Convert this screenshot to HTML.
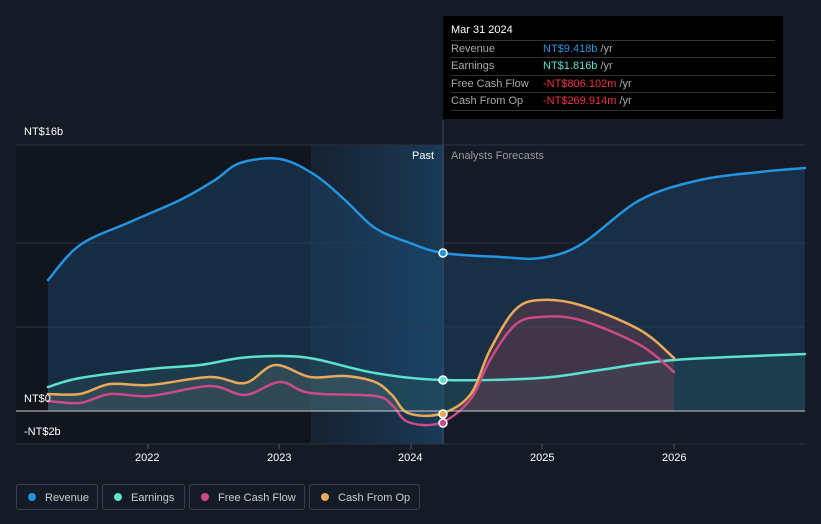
<!DOCTYPE html><html><head><style>
body{margin:0;width:821px;height:524px;background:#151b26;font-family:"Liberation Sans",sans-serif;overflow:hidden;position:relative}
.t{position:absolute;color:#fff;font-size:11px}
.tip{position:absolute;left:443px;top:16px;width:340px;height:103px;background:#000}
.tip div{position:absolute;font-size:11px}
.ln{position:absolute;left:8px;width:324px;height:1px;background:#333}
.leg{position:absolute;top:484px;height:26px;border:1px solid #3a404b;border-radius:3px;color:#ccc;font-size:11px;line-height:26px;box-sizing:border-box}
.leg i{display:inline-block;width:8px;height:8px;border-radius:50%;margin:0 9px 0 11px;vertical-align:-0px}
</style></head><body>
<svg id="s" width="821" height="524" style="position:absolute;left:0;top:0">
<defs><linearGradient id="g" x1="0" x2="1"><stop offset="0" stop-color="#1a3550" stop-opacity=".3"/><stop offset="1" stop-color="#1a4a70" stop-opacity=".7"/></linearGradient></defs>
<rect x="16" y="145" width="295" height="299" fill="#11151e"/>
<rect x="311" y="145" width="133" height="299" fill="url(#g)"/>
<g stroke="#2a3140" stroke-width="1"><line x1="16" y1="145" x2="805" y2="145"/><line x1="16" y1="243" x2="805" y2="243"/><line x1="16" y1="327" x2="805" y2="327"/><line x1="16" y1="444" x2="805" y2="444"/></g>
<line x1="443" y1="120" x2="443" y2="444" stroke="#3a4a5a"/>
<path id="rf" fill="#1d4a6e" fill-opacity=".45"/>
<path id="ef" fill="#2a5a5a" fill-opacity=".35"/>
<path id="cf" fill="#888" fill-opacity=".18"/>
<path id="ff" fill="#7a4050" fill-opacity=".4"/>
<g fill="none" stroke-width="2.5" stroke-linejoin="round" stroke-linecap="round">
<path id="r" stroke="#2394df"/><path id="e" stroke="#5ce0cf"/><path id="f" stroke="#cc4a86"/><path id="c" stroke="#e8a95a"/>
</g>
<line x1="16" y1="411" x2="805" y2="411" stroke="#ccc" stroke-width="1"/>
<g stroke="#fff" stroke-width="1.5"><circle cx="443" cy="253" r="4" fill="#2394df"/><circle cx="443" cy="380" r="4" fill="#5ce0cf"/><circle cx="443" cy="414" r="4" fill="#e8a95a"/><circle cx="443" cy="423" r="4" fill="#cc4a86"/></g>
<g stroke="#555"><line x1="148" y1="444" x2="148" y2="449"/><line x1="279" y1="444" x2="279" y2="449"/><line x1="411" y1="444" x2="411" y2="449"/><line x1="542" y1="444" x2="542" y2="449"/><line x1="674" y1="444" x2="674" y2="449"/></g>
</svg>
<script>
function sm(p){var d="M"+p[0][0]+","+p[0][1];for(var i=0;i<p.length-1;i++){var a=p[i-1]||p[i],b=p[i],c=p[i+1],e=p[i+2]||c;d+=" C"+(b[0]+(c[0]-a[0])/6)+","+(b[1]+(c[1]-a[1])/6)+" "+(c[0]-(e[0]-b[0])/6)+","+(c[1]-(e[1]-b[1])/6)+" "+c[0]+","+c[1];}return d;}
var R=[[48,280],[80,245],[130,222],[180,200],[215,180],[240,163],[280,159],[315,175],[345,200],[375,228],[410,243],[443,253],[500,257],[540,258],[580,245],[640,200],[700,180],[760,172],[805,168]];
var E=[[48,387],[80,378],[150,369],[200,365],[240,358],[280,356],[315,359],[375,373],[443,380],[540,378],[600,370],[674,360],[805,354]];
var F=[[48,401],[80,403],[110,394],[150,396],[210,386],[245,395],[280,382],[310,393],[375,396],[392,405],[408,422],[440,423],[470,400],[490,360],[515,325],[540,317],[580,320],[640,345],[674,372]];
var C=[[48,394],[80,394],[110,384],[150,385],[210,377],[245,383],[275,365],[310,377],[345,376],[375,382],[392,395],[408,413],[440,414],[470,395],[490,350],[515,310],[540,300],[580,305],[640,330],[674,358]];
function s(id,v){document.getElementById(id).setAttribute("d",v);}
s("r",sm(R));s("e",sm(E));s("f",sm(F));s("c",sm(C));
s("rf",sm(R)+" L805,411 L48,411Z");s("ef",sm(E)+" L805,411 L48,411Z");
s("cf",sm(C.slice(0,13))+" L440,411 L48,411Z");
s("ff",sm(C.slice(12))+" L674,411 L440,411Z");
</script>
<div class="t" style="left:24px;top:126px">NT$16b</div>
<div class="t" style="left:24px;top:393px">NT$0</div>
<div class="t" style="left:24px;top:426px">-NT$2b</div>
<div class="t" style="left:412px;top:150px">Past</div>
<div class="t" style="left:451px;top:150px;color:#999">Analysts Forecasts</div>
<div class="t" style="left:135px;top:452px">2022</div>
<div class="t" style="left:267px;top:452px">2023</div>
<div class="t" style="left:398px;top:452px">2024</div>
<div class="t" style="left:530px;top:452px">2025</div>
<div class="t" style="left:662px;top:452px">2026</div>
<div class="tip">
<div style="left:8px;top:8px;color:#fff">Mar 31 2024</div>
<div class="ln" style="top:24px"></div>
<div style="left:8px;top:27px;color:#aaa">Revenue</div><div style="left:100px;top:27px;color:#2394df">NT$9.418b <span style="color:#aaa">/yr</span></div>
<div class="ln" style="top:41px"></div>
<div style="left:8px;top:44px;color:#aaa">Earnings</div><div style="left:100px;top:44px;color:#5ce0cf">NT$1.816b <span style="color:#aaa">/yr</span></div>
<div class="ln" style="top:59px"></div>
<div style="left:8px;top:62px;color:#aaa">Free Cash Flow</div><div style="left:100px;top:62px;color:#f0343c">-NT$806.102m <span style="color:#aaa">/yr</span></div>
<div class="ln" style="top:76px"></div>
<div style="left:8px;top:79px;color:#aaa">Cash From Op</div><div style="left:100px;top:79px;color:#f0343c">-NT$269.914m <span style="color:#aaa">/yr</span></div>
<div class="ln" style="top:94px"></div>
</div>
<div class="leg" style="left:16px;width:82px"><i style="background:#2394df"></i>Revenue</div>
<div class="leg" style="left:102px;width:83px"><i style="background:#5ce0cf"></i>Earnings</div>
<div class="leg" style="left:189px;width:116px"><i style="background:#cc4a86"></i>Free Cash Flow</div>
<div class="leg" style="left:309px;width:111px"><i style="background:#e8a95a"></i>Cash From Op</div>
</body></html>
